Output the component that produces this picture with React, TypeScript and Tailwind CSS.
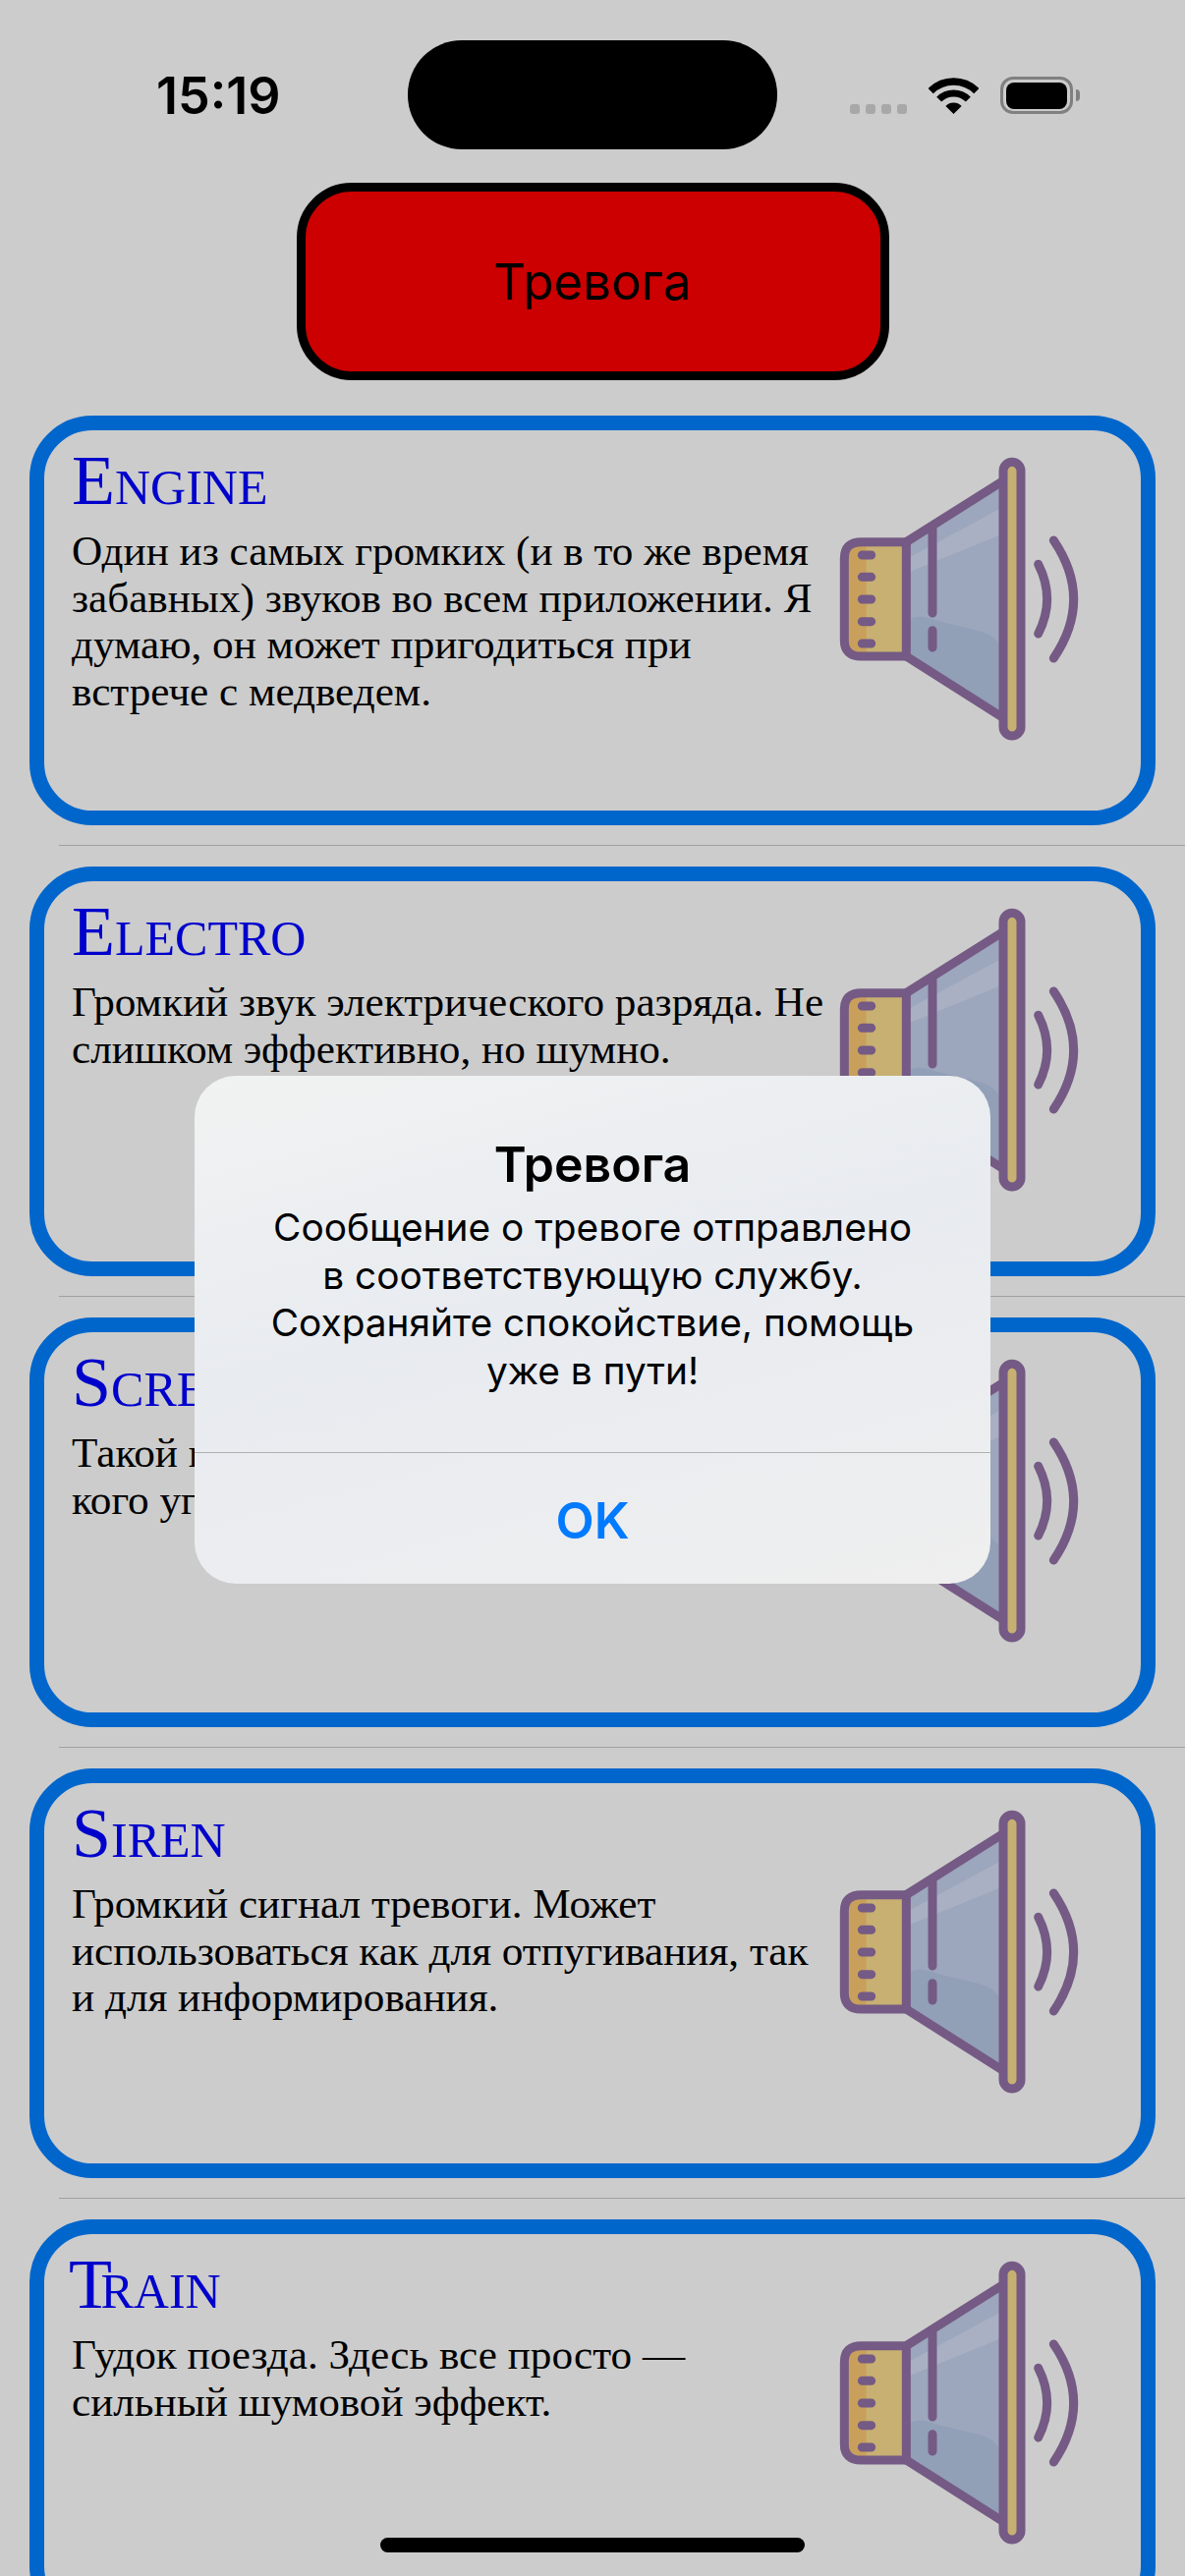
const sounds = [
  {
    title: "Engine",
    text: "Один из самых громких (и в то же время забавных) звуков во всем приложении. Я думаю, он может пригодиться при встрече с медведем.",
  },
  {
    title: "Electro",
    text: "Громкий звук электрического разряда. Не слишком эффективно, но шумно.",
  },
  {
    title: "Scream",
    text: "Такой громкий крик, что можно напугать кого угодно.",
  },
  {
    title: "Siren",
    text: "Громкий сигнал тревоги. Может использоваться как для отпугивания, так и для информирования.",
  },
  {
    title: "Train",
    text: "Гудок поезда. Здесь все просто — сильный шумовой эффект.",
  },
];

const SpeakerIcon = () => (
  <svg viewBox="90 60 780 900" className="w-[260px] h-[300px] shrink-0">
    <path d="M307 335 H170 Q118 335 118 385 V635 Q118 684 170 684 H307 Z" fill="#c7b072" />
    <path d="M185 335 H170 Q118 335 118 385 V635 Q118 684 170 684 H185 Z" fill="#c8a05c" />
    <path d="M307 335 L600 150 V870 L307 684 Z" fill="#9ca6bc" />
    <path d="M320 380 L590 235 V315 L320 425 Z" fill="#a9b0c3" />
    <path d="M320 570 Q345 555 400 575 L540 610 Q580 625 590 650 V855 L320 684 Z" fill="#919fb7" />
    <g stroke="#745a84" strokeWidth="27" fill="none" strokeLinecap="round" strokeLinejoin="round">
      <path d="M307 335 H170 Q118 335 118 385 V635 Q118 684 170 684 H307 Z" />
      <path d="M307 335 L600 150 M307 684 L600 870" />
      <path d="M387 295 V552 M387 605 V657" />
      <path d="M172 375 H200 M172 442 H200 M172 510 H200 M172 578 H200 M172 645 H200" />
      <rect x="603" y="91" width="54" height="836" rx="27" fill="#c7b072" />
      <path d="M710 403 Q764 510 710 615" />
      <path d="M757 330 Q879 510 757 690" />
    </g>
  </svg>
);

const WifiIcon = () => (
  <svg viewBox="0 0 51 37" className="w-[51px] h-[37px]">
    <path d="M2.17 13.67 A33 33 0 0 1 48.83 13.67" fill="none" stroke="#000" strokeWidth="7.5" />
    <path d="M10.65 22.15 A21 21 0 0 1 40.35 22.15" fill="none" stroke="#000" strokeWidth="7" />
    <path d="M17.4 28.9 A11.5 11.5 0 0 1 33.6 28.9 L25.5 37 Z" fill="#000" />
  </svg>
);

const App = () => {
  return (
    <div className="relative h-[2622px] overflow-hidden bg-[#cccccc] font-['Inter',sans-serif] text-black">
      <div className="flex h-[186px] items-start">
        <div className="ml-[159px] mt-[69px] w-[256px] text-[52px] leading-[58px] font-semibold">15:19</div>
        <div className="mt-[41px] h-[111px] w-[376px] rounded-[55px] bg-black" />
        <div className="ml-[74px] mt-[78px] flex items-start">
          <div className="mt-[28px] flex gap-[6px]">
            <div className="h-[10px] w-[10px] rounded-[3px] bg-[#a8a8a8]" />
            <div className="h-[10px] w-[10px] rounded-[3px] bg-[#a8a8a8]" />
            <div className="h-[10px] w-[10px] rounded-[3px] bg-[#a8a8a8]" />
            <div className="h-[10px] w-[10px] rounded-[3px] bg-[#a8a8a8]" />
          </div>
          <div className="ml-[22px] mt-px">
            <WifiIcon />
          </div>
          <div className="ml-[22px] flex items-center">
            <div className="flex h-[38px] w-[74px] items-center justify-center rounded-[13px] border-[3px] border-[#808080]">
              <div className="h-[27px] w-[62px] rounded-[8px] bg-black" />
            </div>
            <div className="ml-[3px] h-[12px] w-[4px] rounded-r-[4px] bg-[#808080]" />
          </div>
        </div>
      </div>

      <div className="flex justify-center">
        <div className="flex h-[201px] w-[603px] items-center justify-center rounded-[56px] border-[9px] border-black bg-[#cc0000] pt-[2px] text-[51px]">
          Тревога
        </div>
      </div>

      <div className="mt-[36px] flex flex-col">
        {sounds.map((sound, i) => (
          <div key={sound.title}>
            <div className="mx-[30px] flex h-[417px] rounded-[64px] border-[15px] border-[#0066cc] pl-[28px]">
              <div className="w-[770px] font-['Liberation_Serif',serif]">
                <div className="mt-[15px] text-[72px] leading-[72px] text-[#0000cc] [font-variant:small-caps]">
                  {sound.title === "Train" ? (
                    <>
                      <span className="-ml-[3px] tracking-[-0.16em]">T</span>rain
                    </>
                  ) : (
                    sound.title
                  )}
                </div>
                <p className="mt-[12px] text-[43.2px] leading-[47.6px]">{sound.text}</p>
              </div>
              <div className="ml-[7px] pt-[22px]">
                <SpeakerIcon />
              </div>
            </div>
            {i < sounds.length - 1 && <div className="ml-[60px] mt-[20px] mb-[21px] h-px bg-[#a0a0a0]" />}
          </div>
        ))}
      </div>

      {/* alert over the list */}
      <div className="absolute left-[198px] top-[1095px] flex h-[517px] w-[810px] flex-col rounded-[42px] bg-[linear-gradient(165deg,#f1f3f2_0%,#e8ebf0_45%,#efefef_100%)] text-center">
        <div className="h-[384px] border-b border-[#b0b0b0] pt-[60px]">
          <div className="text-[50px] leading-[60px] font-semibold">Тревога</div>
          <p className="mt-[10px] text-[38.8px] leading-[48.5px]">
            Сообщение о тревоге отправлено
            <br />в соответствующую службу.
            <br />Сохраняйте спокойствие, помощь
            <br />уже в пути!
          </p>
        </div>
        <div className="flex flex-1 items-center justify-center pt-[5px] text-[51px] font-semibold text-[#007aff]">OK</div>
      </div>

      <div className="absolute bottom-[24px] left-[387px] h-[15px] w-[432px] rounded-full bg-black" />
    </div>
  );
};

export default App;
